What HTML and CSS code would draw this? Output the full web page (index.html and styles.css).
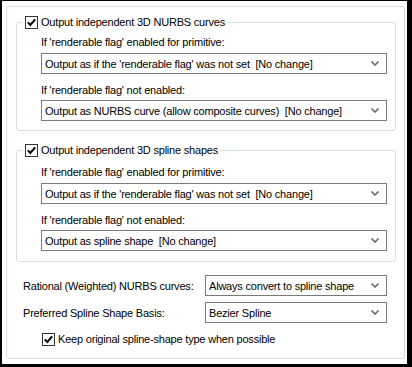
FILE: index.html
```html
<!DOCTYPE html>
<html>
<head>
  <meta charset="utf-8">
  <title>Spline export options</title>
  <link rel="stylesheet" href="styles.css">
</head>
<body>
  <div class="window">
    <div class="panel">

      <fieldset class="group">
        <legend class="check">
          <svg class="box" width="13" height="13" viewBox="0 0 13 13"><rect x="0.5" y="0.5" width="12" height="12" fill="#fff" stroke="#333"/><path d="M2.8 6.4 L5.3 9 L10.2 3.4" fill="none" stroke="#000" stroke-width="2"/></svg>
          <span>Output independent 3D NURBS curves</span>
        </legend>
        <div class="group-body">
          <div class="label">If 'renderable flag' enabled for primitive:</div>
          <div class="combo">
            <span>Output as if the 'renderable flag' was not set &nbsp;[No change]</span>
            <svg class="arrow" width="8" height="5" viewBox="0 0 8 5"><path d="M0.5 0.5 L4 4 L7.5 0.5" fill="none" stroke="#6d6d6d" stroke-width="1.6"/></svg>
          </div>
          <div class="label">If 'renderable flag' not enabled:</div>
          <div class="combo">
            <span>Output as NURBS curve (allow composite curves) &nbsp;[No change]</span>
            <svg class="arrow" width="8" height="5" viewBox="0 0 8 5"><path d="M0.5 0.5 L4 4 L7.5 0.5" fill="none" stroke="#6d6d6d" stroke-width="1.6"/></svg>
          </div>
        </div>
      </fieldset>

      <fieldset class="group second">
        <legend class="check">
          <svg class="box" width="13" height="13" viewBox="0 0 13 13"><rect x="0.5" y="0.5" width="12" height="12" fill="#fff" stroke="#333"/><path d="M2.8 6.4 L5.3 9 L10.2 3.4" fill="none" stroke="#000" stroke-width="2"/></svg>
          <span>Output independent 3D spline shapes</span>
        </legend>
        <div class="group-body">
          <div class="label">If 'renderable flag' enabled for primitive:</div>
          <div class="combo">
            <span>Output as if the 'renderable flag' was not set &nbsp;[No change]</span>
            <svg class="arrow" width="8" height="5" viewBox="0 0 8 5"><path d="M0.5 0.5 L4 4 L7.5 0.5" fill="none" stroke="#6d6d6d" stroke-width="1.6"/></svg>
          </div>
          <div class="label">If 'renderable flag' not enabled:</div>
          <div class="combo">
            <span>Output as spline shape &nbsp;[No change]</span>
            <svg class="arrow" width="8" height="5" viewBox="0 0 8 5"><path d="M0.5 0.5 L4 4 L7.5 0.5" fill="none" stroke="#6d6d6d" stroke-width="1.6"/></svg>
          </div>
        </div>
      </fieldset>

      <div class="fields">
        <div class="field-label">Rational (Weighted) NURBS curves:</div>
        <div class="combo">
          <span>Always convert to spline shape</span>
          <svg class="arrow" width="8" height="5" viewBox="0 0 8 5"><path d="M0.5 0.5 L4 4 L7.5 0.5" fill="none" stroke="#6d6d6d" stroke-width="1.6"/></svg>
        </div>
        <div class="field-label">Preferred Spline Shape Basis:</div>
        <div class="combo">
          <span>Bezier Spline</span>
          <svg class="arrow" width="8" height="5" viewBox="0 0 8 5"><path d="M0.5 0.5 L4 4 L7.5 0.5" fill="none" stroke="#6d6d6d" stroke-width="1.6"/></svg>
        </div>
      </div>

      <div class="check keep">
        <svg class="box" width="13" height="13" viewBox="0 0 13 13"><rect x="0.5" y="0.5" width="12" height="12" fill="#fff" stroke="#333"/><path d="M2.8 6.4 L5.3 9 L10.2 3.4" fill="none" stroke="#000" stroke-width="2"/></svg>
        <span>Keep original spline-shape type when possible</span>
      </div>

    </div>
  </div>
</body>
</html>
```

FILE: styles.css
```css
html, body {
  margin: 0;
  padding: 0;
  background: #fff;
}
body {
  font-family: "Liberation Sans", Arial, sans-serif;
  font-size: 11px;
  line-height: 14px;
  letter-spacing: -0.2px;
  color: #000;
}

.window {
  box-sizing: border-box;
  width: 412px;
  height: 367px;
  border-style: solid;
  border-color: #000;
  border-width: 1px 5px 3px 2px;
  padding: 5px 2px 5px 4px;
  display: flex;
}

.panel {
  flex: 1;
  border: 1px solid #d5dfe5;
  border-radius: 3px;
  padding: 8px 8px 0 9px;
}

/* group boxes */
.group {
  margin: 0;
  min-width: 0;
  border: 1px solid #d5dfe5;
  border-radius: 3px;
  padding: 0 8px 9px 6px;
}
.group.second {
  margin-top: 12px;
  padding-bottom: 10px;
}
.group.second .group-body {
  padding-top: 2px;
}
.group legend {
  padding: 0 2px;
}
.group-body {
  padding-left: 18px;
}
.label {
  margin-top: 6px;
  margin-bottom: 4px;
}
.group-body .combo + .label {
  margin-top: 9px;
  margin-bottom: 3px;
}

/* checkbox + text */
.check {
  display: flex;
  align-items: center;
  gap: 3px;
  height: 14px;
}
.check .box {
  flex: none;
}

/* drop-down lists */
.combo {
  box-sizing: border-box;
  height: 21px;
  border: 1px solid #7a7a7a;
  background: #fff;
  display: flex;
  align-items: center;
  padding: 0 7px 0 3px;
}
.combo span {
  flex: 1;
  white-space: nowrap;
  overflow: hidden;
}
.combo .arrow {
  flex: none;
}

/* bottom fields */
.fields {
  display: grid;
  grid-template-columns: 1fr 182px;
  row-gap: 6px;
  align-items: center;
  margin-top: 13px;
  padding: 0 9px 0 7px;
}
.keep {
  margin-top: 9px;
  padding-left: 26px;
}
```
